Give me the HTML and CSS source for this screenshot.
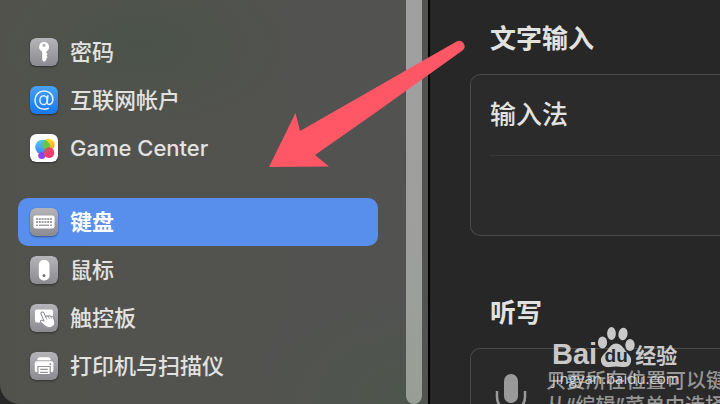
FILE: index.html
```html
<!DOCTYPE html>
<html lang="zh-CN">
<head>
<meta charset="utf-8">
<title>键盘</title>
<link rel="stylesheet" href="styles.css">
</head>
<body>
<div class="window">
  <aside class="sidebar">
    <nav class="nav">
      <div class="group">
        <a class="item" href="#passwords">
          <svg class="icon" viewBox="0 0 28 28" aria-hidden="true">
            <defs>
              <linearGradient id="gray" x1="0" y1="0" x2="0" y2="1"><stop offset="0" stop-color="#b5b4b9"/><stop offset="1" stop-color="#8b8a90"/></linearGradient>
              <linearGradient id="blue" x1="0" y1="0" x2="0" y2="1"><stop offset="0" stop-color="#47a1f5"/><stop offset="1" stop-color="#1578ef"/></linearGradient>
            </defs>
            <rect width="28" height="28" rx="6" fill="url(#gray)"/>
            <path fill="#fff" fill-rule="evenodd" d="M14 4a5 5 0 0 1 2.400 9.400V15l1.200 1.200-1.200 1.500 1.200 1.300-1.200 1.500v1.300L14 24l-1.800-1.900V13.600A5 5 0 0 1 14 4zm0 1.800a1.500 1.500 0 1 0 0 3 1.500 1.500 0 0 0 0-3z"/>
          </svg>
          <span>密码</span>
        </a>
        <a class="item" href="#accounts">
          <svg class="icon" viewBox="0 0 28 28" aria-hidden="true">
            <rect width="28" height="28" rx="6" fill="url(#blue)"/>
            <g fill="none" stroke="#e4f4ff" stroke-width="1.500" stroke-linecap="round">
              <ellipse cx="13.600" cy="14.200" rx="3.700" ry="4.400"/>
              <path d="M17.800 9.800l-.6 6.500c-.2 3.400 5.700 2.900 5.700-3 0-4.700-3.600-8.300-8.700-8.300-5.300 0-9.200 3.900-9.200 9.300 0 5.300 3.800 8.900 9.200 8.900 1.700 0 3-.3 4.100-.8"/>
            </g>
          </svg>
          <span>互联网帐户</span>
        </a>
        <a class="item" href="#game-center">
          <svg class="icon" viewBox="0 0 28 28" aria-hidden="true">
            <defs>
              <linearGradient id="sky" x1="0" y1="0" x2="0" y2="1"><stop offset="0" stop-color="#55c9ef"/><stop offset="1" stop-color="#3787f6"/></linearGradient>
              <linearGradient id="sun" x1="0" y1="0" x2="0" y2="1"><stop offset="0" stop-color="#f8df2c"/><stop offset="1" stop-color="#f59a29"/></linearGradient>
              <clipPath id="skyclip"><circle cx="12.500" cy="13" r="7.300"/></clipPath>
            </defs>
            <rect width="28" height="28" rx="6" fill="#fff"/>
            <circle cx="18.500" cy="11" r="6.200" fill="url(#sun)"/>
            <circle cx="12.500" cy="13" r="7.300" fill="url(#sky)"/>
            <circle cx="18.500" cy="11" r="6.200" fill="#62c84b" clip-path="url(#skyclip)"/>
            <circle cx="11.800" cy="21.500" r="3.600" fill="#8b45ee"/>
            <circle cx="19" cy="18.800" r="5.300" fill="#f43c70"/>
            <circle cx="19" cy="18.800" r="5.300" fill="#cf5269" clip-path="url(#skyclip)"/>
          </svg>
          <span>Game Center</span>
        </a>
      </div>
      <div class="group">
        <a class="item selected" href="#keyboard" aria-current="page">
          <svg class="icon" viewBox="0 0 28 28" aria-hidden="true">
            <rect width="28" height="28" rx="6" fill="url(#gray)"/>
            <rect x="3.500" y="7.500" width="21" height="13" rx="2" fill="#fff"/>
            <path d="M6 11h16M6 14h16" stroke="#a3a2a7" stroke-width="2" stroke-dasharray="2 .8"/>
            <path d="M6 17.200h2m1 0h10m1 0h2" stroke="#a3a2a7" stroke-width="1.600"/>
          </svg>
          <span>键盘</span>
        </a>
        <a class="item" href="#mouse">
          <svg class="icon" viewBox="0 0 28 28" aria-hidden="true">
            <rect width="28" height="28" rx="6" fill="url(#gray)"/>
            <rect x="8.800" y="4" width="10.700" height="20.500" rx="4.800" fill="#fff"/>
            <circle cx="14" cy="19.500" r="1.500" fill="#77767b"/>
          </svg>
          <span>鼠标</span>
        </a>
        <a class="item" href="#trackpad">
          <svg class="icon" viewBox="0 0 28 28" aria-hidden="true">
            <rect width="28" height="28" rx="6" fill="url(#gray)"/>
            <rect x="5" y="5.500" width="18" height="13" rx="1.800" fill="#fff"/>
            <path fill="#fff" stroke="#929197" stroke-width="1.100" stroke-linejoin="round" d="M11.300 8.500c1-1 2.200-.4 2.700.7l2 4.200c-.3-1.800 1.800-2 2.500-.7.400-1.300 2-1.200 2.500.1.700-1.100 2.100-.5 2.400.7l1.300 3.800c.9 3-1 5.700-4.100 6.300-3.300.7-5.500-.9-7.600-3.200l-2.200-2.100c-1-1-.1-2.300 1.300-2l2 .6-3-6.700c-.3-.7-.2-1.300.2-1.700z"/>
            <path d="M16 13.400l.9 2.200m1.600-2.900l.9 2.100m1.600-2l.7 1.800" stroke="#929197" stroke-width=".8"/>
          </svg>
          <span>触控板</span>
        </a>
        <a class="item" href="#printers">
          <svg class="icon" viewBox="0 0 28 28" aria-hidden="true">
            <rect width="28" height="28" rx="6" fill="url(#gray)"/>
            <path d="M7.500 8.200V7.200A2 2 0 0 1 9.500 5.200h9a2 2 0 0 1 2 2v1z" fill="#fff"/>
            <rect x="4.700" y="9.300" width="18.700" height="11" rx="2.200" fill="#fff"/>
            <circle cx="20.300" cy="12" r=".9" fill="#929197"/>
            <path d="M7.900 14.500h12.300v8.200H7.900z" fill="#fff" stroke="#929197" stroke-width="1.200"/>
            <path d="M10.200 17.300h7.600m-7.600 3h7.600" stroke="#929197" stroke-width="1.200"/>
          </svg>
          <span>打印机与扫描仪</span>
        </a>
      </div>
    </nav>
    <div class="scrollbar"></div>
  </aside>
  <main class="content">
    <h2>文字输入</h2>
    <section class="card">
      <div class="row">输入法</div>
    </section>
    <h2>听写</h2>
    <section class="card dictation">
      <svg class="mic" viewBox="0 0 32 48" aria-hidden="true">
        <rect x="9" y="1" width="14" height="29" rx="7" fill="#9a9a9a"/>
        <path d="M2 18v6c0 8 6 13 14 13s14-5 14-13v-6M16 37v9M8 46h16" fill="none" stroke="#9a9a9a" stroke-width="2.500"/>
      </svg>
      <p>只要所在位置可以键入文本，<br>从“编辑”菜单中选择“开始听写”。</p>
    </section>
  </main>
  <svg class="arrow" viewBox="0 0 200 130" aria-hidden="true">
    <path fill="#ff5766" d="M1 127L27.500 73l4.500 18L189 1.300c5-3 11 5.500 5.500 9.200L107 73 47 115l14 11.500z"/>
  </svg>
  <div class="watermark">
    <div class="brand">
      <span class="latin">Bai</span>
      <span class="paw">
        <svg viewBox="0 0 38 42" aria-hidden="true">
          <g fill="#c9c9c9">
            <ellipse cx="5.500" cy="16.500" rx="4.600" ry="6"/>
            <ellipse cx="14.500" cy="7.500" rx="4.400" ry="6.500"/>
            <ellipse cx="26" cy="8" rx="4.600" ry="6.300" transform="rotate(10 26 8)"/>
            <ellipse cx="33" cy="19" rx="4.700" ry="6"/>
            <path d="M19 17.500c5 0 7 4 10 8 3 3.500 6 6 5 10-1 5-5 6-9 5.500-4-.7-8-.7-12 0-5 .7-8.500-1.500-9-6-.5-4 2.500-6.500 5.500-9.500 3-4 5-8 9.500-8z"/>
          </g>
        </svg>
        <b>du</b>
      </span>
      <span class="han">经验</span>
    </div>
    <div class="site">jingyan.baidu.com</div>
  </div>
</div>
</body>
</html>
```
FILE: styles.css
```css
* {
  box-sizing: border-box;
}

body {
  margin: 0;
  background: #272727;
  font-family: Inter, "Noto Sans CJK SC", sans-serif;
  color: #e2e2e0;
}

.window {
  position: relative;
  display: flex;
  height: 100vh;
  overflow: hidden;
}

.sidebar {
  flex: 0 0 430px;
  display: flex;
  justify-content: space-between;
  padding-right: 6px;
  border-right: 2px solid #000;
  border-bottom-left-radius: 20px;
  background:
    radial-gradient(ellipse 160px 90px at 140px 45px, #4b5349, transparent),
    radial-gradient(ellipse 160px 120px at 400px 400px, #4e554d, transparent),
    linear-gradient(90deg, #52524d, #525251);
}

.nav {
  width: 378px;
  padding: 28px 0 0 18px;
}

.group {
  margin-bottom: 26px;
}

.item {
  display: flex;
  align-items: center;
  gap: 12px;
  height: 48px;
  padding: 0 12px;
  border-radius: 10px;
  color: inherit;
  font-size: 22px;
  font-weight: 500;
  line-height: 32px;
  text-decoration: none;
  white-space: nowrap;
}

.item.selected {
  background: #588eec;
  color: #fff;
  font-weight: 700;
}

.icon {
  flex: none;
  width: 28px;
  height: 28px;
  border-radius: 6px;
  box-shadow: 0 1px 2px rgba(0, 0, 0, 0.4);
}

.scrollbar {
  width: 16px;
  border-radius: 0 0 8px 8px;
  background: linear-gradient(#a0a0a0, #9e9f9d 60%, #989e96);
}

.content {
  flex: 1;
  min-width: 0;
  padding: 20px 0 0 40px;
  font-size: 26px;
  font-weight: 500;
  line-height: 38px;
}

.content h2 {
  margin: 0 0 16px 20px;
  font-size: 26px;
  font-weight: 700;
}

.card {
  min-height: 162px;
  margin-bottom: 58px;
  border: 1px solid #494949;
  border-right: 0;
  border-radius: 10px 0 0 10px;
  background: #2b2b2b;
}

.row {
  margin-left: 19px;
  padding: 21px 0;
  border-bottom: 1px solid #383838;
}

.dictation {
  display: flex;
  gap: 19px;
  padding: 20px 0 0 24px;
  background: #292929;
}

.mic {
  flex: none;
  width: 32px;
  height: 48px;
  margin-top: 4px;
}

.dictation p {
  margin: 0;
  color: #969696;
  font-size: 20px;
  line-height: 25px;
  white-space: nowrap;
}

.arrow {
  position: absolute;
  top: 40px;
  left: 268px;
  width: 200px;
  height: 130px;
}

.watermark {
  position: absolute;
  top: 326px;
  left: 552px;
  color: #c9c9c9;
}

.brand {
  display: flex;
  align-items: flex-end;
  height: 42px;
}

.latin {
  font: 700 29px/28px "Liberation Sans", sans-serif;
}

.paw {
  position: relative;
  width: 38px;
  height: 42px;
}

.paw svg {
  display: block;
}

.paw b {
  position: absolute;
  inset: 20px 0 0 0;
  color: #292929;
  font: 700 19px/20px "Liberation Sans", sans-serif;
  text-align: center;
}

.han {
  font-size: 21px;
  font-weight: 700;
  line-height: 24px;
}

.site {
  color: #d4d4d4;
  font: 15px/20px "Open Sans", sans-serif;
}
```
